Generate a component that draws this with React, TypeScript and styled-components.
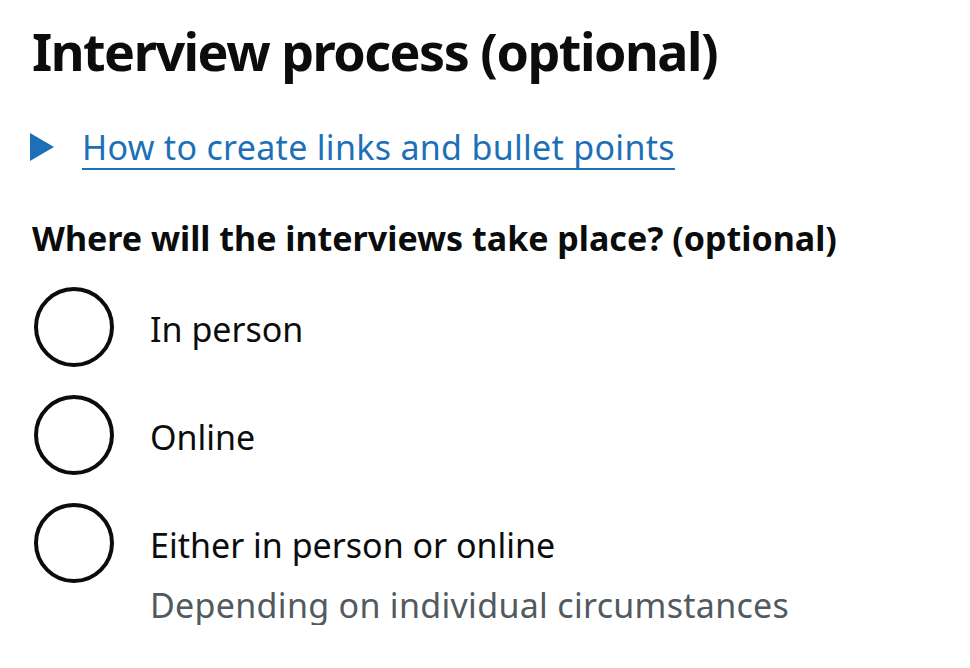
import React from "react";
import styled, { createGlobalStyle } from "styled-components";

const Global = createGlobalStyle`
  html, body { margin: 0; padding: 0; background: #ffffff; }
  body { font-family: "Noto Sans", Arial, sans-serif; color: #0b0c0c; }
`;

const Page = styled.main`
  padding: 21px 0 0 32px;
`;

const Heading = styled.h2`
  margin: 0;
  font-size: 52px;
  line-height: 60px;
  font-weight: 700;
  letter-spacing: -1.5px;
`;

const Details = styled.div`
  display: flex;
  align-items: center;
  margin-top: 46px;
`;

const Arrow = styled.svg`
  width: 24px;
  height: 28px;
  margin-left: -2px;
  flex: none;
`;

const SummaryLink = styled.a`
  margin-left: 28px;
  font-size: 34px;
  line-height: 40px;
  letter-spacing: 0.3px;
  color: #1d70b8;
  text-decoration: underline;
  text-decoration-thickness: 2px;
  text-underline-offset: 8px;
`;

const Fieldset = styled.fieldset`
  margin: 51px 0 0;
  padding: 0;
  border: 0;
`;

const Legend = styled.legend`
  padding: 0;
  font-size: 34px;
  line-height: 40px;
  font-weight: 700;
`;

const Radios = styled.div`
  display: flex;
  flex-direction: column;
  gap: 20px;
  margin-top: 25px;
`;

const Item = styled.div`
  display: flex;
  flex-wrap: wrap;
`;

const Circle = styled.span`
  box-sizing: border-box;
  flex: none;
  width: 80px;
  height: 80px;
  margin: 4px 4px 4px 2px;
  border: 4px solid #0b0c0c;
  border-radius: 50%;
`;

const Label = styled.label`
  align-self: center;
  padding: 4px 0 0 32px;
  font-size: 34px;
  line-height: 40px;
`;

const Hint = styled.div`
  flex-basis: 100%;
  padding-left: 118px;
  margin-top: -2px;
  font-size: 34px;
  line-height: 40px;
  letter-spacing: 0.3px;
  color: #505a5f;
`;

const options = [
  { label: "In person" },
  { label: "Online" },
  { label: "Either in person or online", hint: "Depending on individual circumstances" },
];

export default function App() {
  return (
    <>
      <Global />
      <Page>
        <Heading>Interview process (optional)</Heading>
        <Details>
          <Arrow viewBox="0 0 24 28" aria-hidden="true">
            <polygon points="0,0 24,14 0,28" fill="#1d70b8" />
          </Arrow>
          <SummaryLink href="#">How to create links and bullet points</SummaryLink>
        </Details>
        <Fieldset>
          <Legend>Where will the interviews take place? (optional)</Legend>
          <Radios>
            {options.map((o) => (
              <Item key={o.label}>
                <Circle />
                <Label>{o.label}</Label>
                {o.hint && <Hint>{o.hint}</Hint>}
              </Item>
            ))}
          </Radios>
        </Fieldset>
      </Page>
    </>
  );
}
